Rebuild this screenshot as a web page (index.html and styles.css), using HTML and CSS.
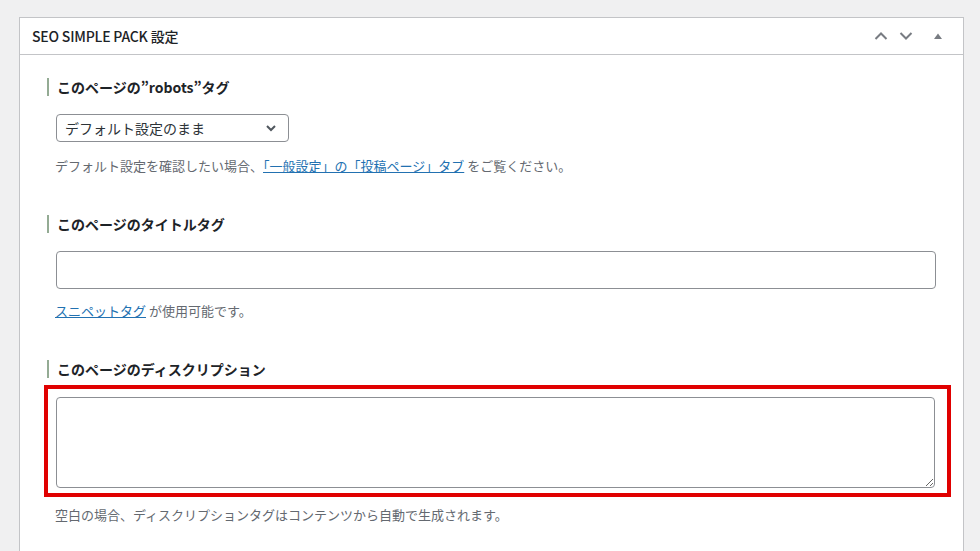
FILE: index.html
```html
<!DOCTYPE html>
<html lang="ja">
<head>
<meta charset="utf-8">
<link rel="stylesheet" href="styles.css">
</head>
<body>
<div class="postbox">
  <div class="postbox-header">
    <h2 class="hndle">SEO SIMPLE PACK 設定</h2>
    <div class="handle-actions">
      <button class="hbtn" aria-label="上へ移動">
        <svg width="14" height="10" viewBox="0 0 14 10"><path d="M1.5 8 L7 2.5 L12.5 8" fill="none" stroke="#787c82" stroke-width="2"/></svg>
      </button>
      <button class="hbtn" aria-label="下へ移動">
        <svg width="14" height="10" viewBox="0 0 14 10"><path d="M1.5 2 L7 7.5 L12.5 2" fill="none" stroke="#787c82" stroke-width="2"/></svg>
      </button>
      <button class="hbtn toggle" aria-label="パネルを切り替え">
        <svg width="10" height="8" viewBox="0 0 10 8"><path d="M1 7 L5 1.5 L9 7 Z" fill="#787c82"/></svg>
      </button>
    </div>
  </div>
  <div class="inside">
    <section class="field">
      <h3 class="field-label">このページの”robots”タグ</h3>
      <div class="select">
        <span>デフォルト設定のまま</span>
        <svg width="12" height="8" viewBox="0 0 12 8"><path d="M2 2 L6 6 L10 2" fill="none" stroke="#50575e" stroke-width="2"/></svg>
      </div>
      <p class="desc">デフォルト設定を確認したい場合、<a href="#">「一般設定」の「投稿ページ」タブ</a> をご覧ください。</p>
    </section>
    <section class="field">
      <h3 class="field-label">このページのタイトルタグ</h3>
      <input class="text-input" type="text">
      <p class="desc snip"><a href="#">スニペットタグ</a> が使用可能です。</p>
    </section>
    <section class="field">
      <h3 class="field-label">このページのディスクリプション</h3>
      <div class="highlight">
        <textarea class="textarea"></textarea>
      </div>
      <p class="desc after">空白の場合、ディスクリプションタグはコンテンツから自動で生成されます。</p>
    </section>
  </div>
</div>
</body>
</html>
```

FILE: styles.css
```css
* { box-sizing: border-box; }
html, body { margin: 0; height: 100%; overflow: hidden; }
body {
  background: #f0f0f1;
  font-family: "Noto Sans", "Noto Sans CJK JP", sans-serif;
  color: #1d2327;
  padding: 17px 17px 0 19px;
}
.postbox {
  width: 945px;
  background: #fff;
  border: 1px solid #c3c4c7;
  height: 600px;
}
.postbox-header {
  height: 37px;
  border-bottom: 1px solid #c3c4c7;
  display: flex;
  align-items: center;
  justify-content: space-between;
}
.hndle {
  margin: 0 0 0 12px;
  font-size: 14px;
  font-weight: 500;
  font-family: "Noto Sans CJK JP", sans-serif;
  letter-spacing: -0.2px;
  line-height: 1;
}
.handle-actions {
  display: flex;
  align-items: center;
  margin-right: 10px;
}
.hbtn {
  background: none;
  border: 0;
  padding: 0;
  width: 25px;
  height: 30px;
  display: flex;
  align-items: center;
  justify-content: center;
}
.hbtn.toggle { width: 30px; margin-left: 5px; }
.inside {
  padding: 23px 0 0 36px;
  font-family: "Noto Sans CJK JP", sans-serif;
}
.field { margin-bottom: 40px; width: 880px; }
.field-label {
  margin: 0 0 18px -9px;
  padding-left: 8px;
  border-left: 2px solid #94ab94;
  font-size: 14px;
  font-weight: 700;
  line-height: 18px;
  height: 18px;
}
.select {
  width: 233px;
  height: 28px;
  border: 1px solid #8c8f94;
  border-radius: 4px;
  display: flex;
  align-items: center;
  justify-content: space-between;
  padding: 0 11px 0 8px;
  font-size: 14px;
  color: #2c3338;
}
.desc {
  margin: 15px 0 0 -1px;
  font-size: 13px;
  line-height: 18px;
  color: #646970;
}
.desc a { color: #2271b1; text-decoration: underline; }
.desc.snip { margin-top: 13px; }
.text-input {
  display: block;
  width: 880px;
  height: 38px;
  border: 1px solid #8c8f94;
  border-radius: 4px;
  margin: 0;
}
.highlight {
  margin: -11px 0 0 -12px;
  width: 907px;
  height: 112px;
  border: 4px solid #e00000;
  padding: 8px 12px 5px 8px;
}
.textarea {
  display: block;
  width: 879px;
  height: 91px;
  border: 1px solid #8c8f94;
  border-radius: 4px;
  margin: 0;
  resize: both;
}
.desc.after { margin-top: 9px; }
```
